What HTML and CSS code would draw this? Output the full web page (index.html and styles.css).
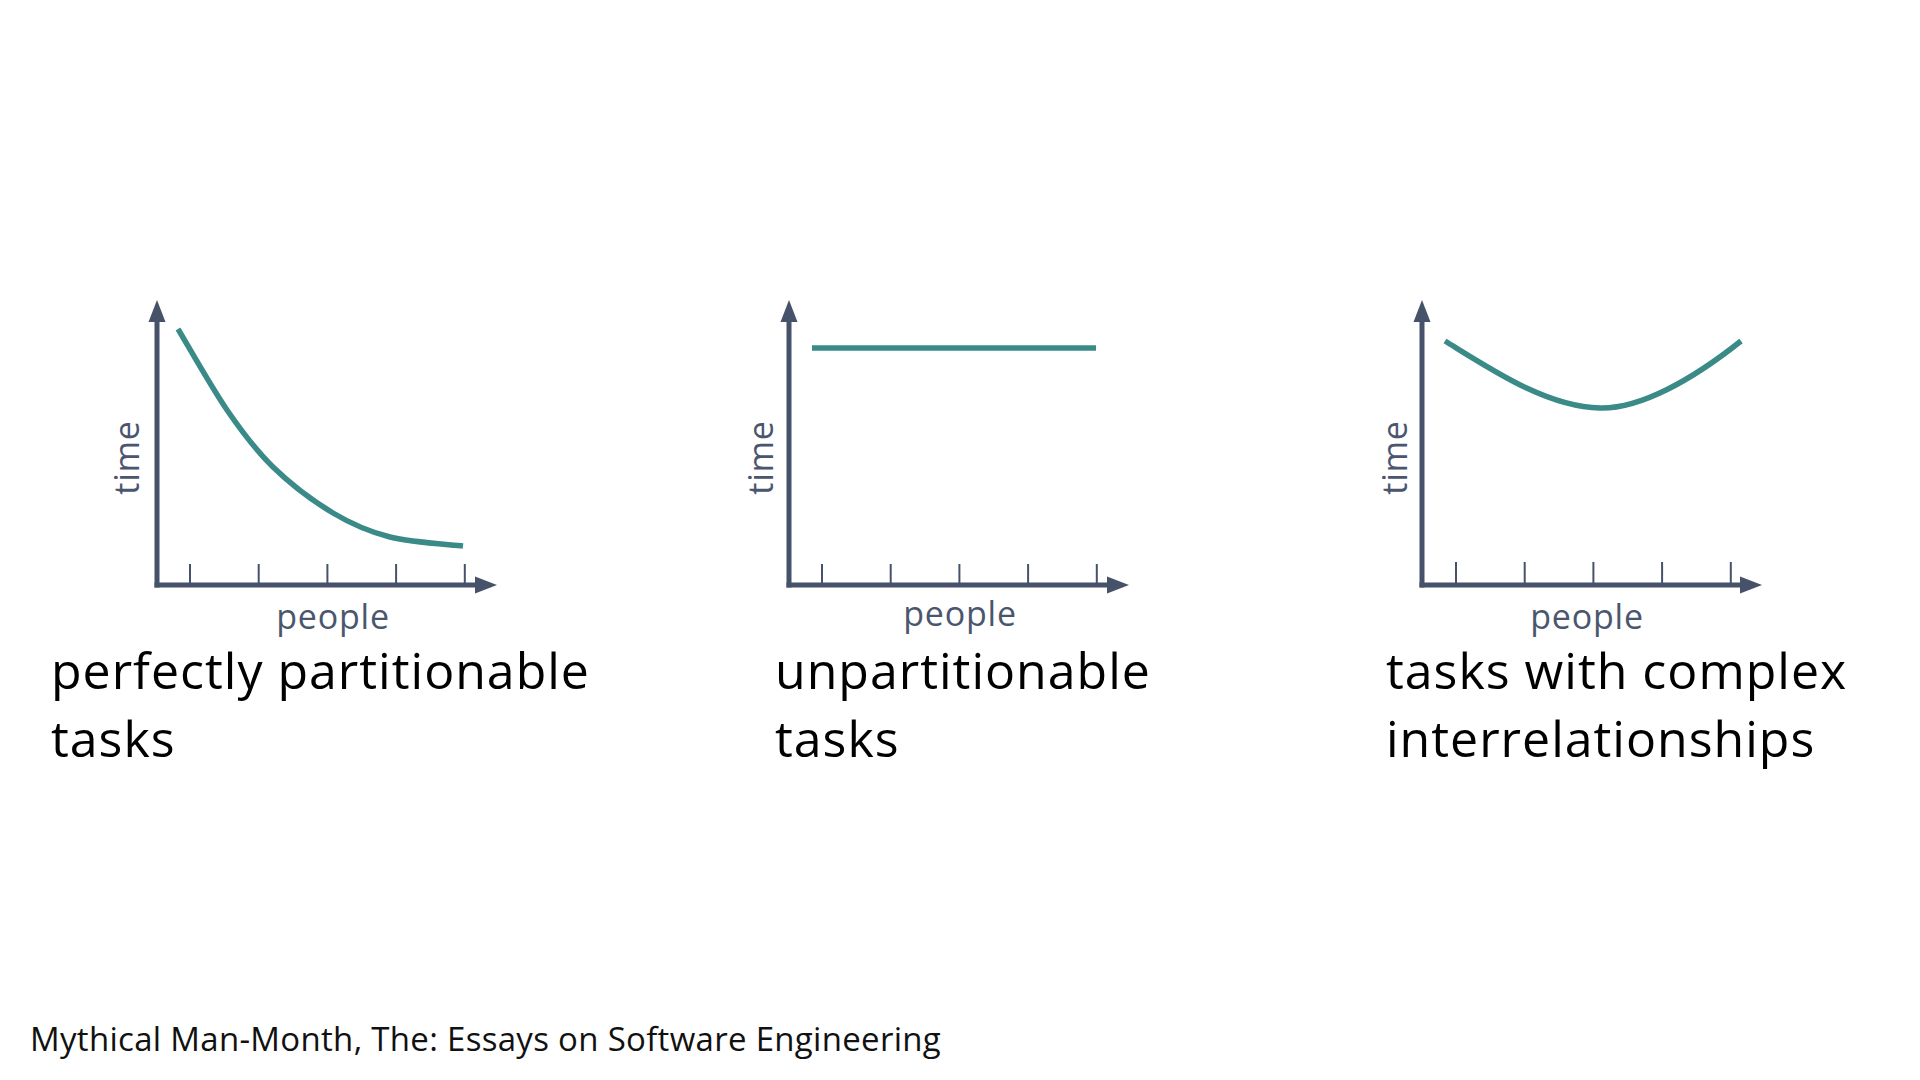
FILE: index.html
```html
<!DOCTYPE html>
<html lang="en">
<head>
<meta charset="utf-8">
<title>Mythical Man-Month</title>
<link rel="stylesheet" href="styles.css">
</head>
<body>
<main class="slide">
  <section class="panels">
    <figure class="panel panel--a">
      <svg class="chart" viewBox="0 0 396 346" width="396" height="346">
        <line class="axis" x1="50" y1="297.5" x2="50" y2="28"/>
        <polygon class="arrow" points="50,10 41.5,32 58.5,32"/>
        <line class="axis" x1="47.5" y1="295" x2="372" y2="295"/>
        <polygon class="arrow" points="390,295 368,286.5 368,303.5"/>
        <g class="ticks">
          <line x1="83" y1="274" x2="83" y2="295"/>
          <line x1="151.7" y1="274" x2="151.7" y2="295"/>
          <line x1="220.4" y1="274" x2="220.4" y2="295"/>
          <line x1="289.1" y1="274" x2="289.1" y2="295"/>
          <line x1="357.8" y1="274" x2="357.8" y2="295"/>
        </g>
        <path class="curve" d="M71 39 C79.2 52.5 104.2 97 120 120 C135.8 143 148.3 159.8 166 177 C183.7 194.2 206.5 211.3 226 223 C245.5 234.7 261.3 241.5 283 247 C304.7 252.5 343.8 254.5 356 256"/>
        <text class="axis-label" transform="translate(32 167.5) rotate(-90)" text-anchor="middle">time</text>
        <text class="axis-label" x="226" y="339" text-anchor="middle">people</text>
      </svg>
      <figcaption class="caption">perfectly partitionable<br>tasks</figcaption>
    </figure>
    <figure class="panel panel--b">
      <svg class="chart" viewBox="0 0 396 346" width="396" height="346">
        <line class="axis" x1="50" y1="297.5" x2="50" y2="28"/>
        <polygon class="arrow" points="50,10 41.5,32 58.5,32"/>
        <line class="axis" x1="47.5" y1="295" x2="372" y2="295"/>
        <polygon class="arrow" points="390,295 368,286.5 368,303.5"/>
        <g class="ticks">
          <line x1="83" y1="274" x2="83" y2="295"/>
          <line x1="151.7" y1="274" x2="151.7" y2="295"/>
          <line x1="220.4" y1="274" x2="220.4" y2="295"/>
          <line x1="289.1" y1="274" x2="289.1" y2="295"/>
          <line x1="357.8" y1="274" x2="357.8" y2="295"/>
        </g>
        <path class="curve" d="M73 58 L357 58"/>
        <text class="axis-label" transform="translate(34 167.5) rotate(-90)" text-anchor="middle">time</text>
        <text class="axis-label" x="221" y="336" text-anchor="middle">people</text>
      </svg>
      <figcaption class="caption">unpartitionable<br>tasks</figcaption>
    </figure>
    <figure class="panel panel--c">
      <svg class="chart" viewBox="0 0 396 346" width="396" height="346">
        <line class="axis" x1="50" y1="297.5" x2="50" y2="28"/>
        <polygon class="arrow" points="50,10 41.5,32 58.5,32"/>
        <line class="axis" x1="47.5" y1="295" x2="372" y2="295"/>
        <polygon class="arrow" points="390,295 368,286.5 368,303.5"/>
        <g class="ticks">
          <line x1="84" y1="272" x2="84" y2="295"/>
          <line x1="152.7" y1="272" x2="152.7" y2="295"/>
          <line x1="221.4" y1="272" x2="221.4" y2="295"/>
          <line x1="290.1" y1="272" x2="290.1" y2="295"/>
          <line x1="358.8" y1="272" x2="358.8" y2="295"/>
        </g>
        <path class="curve" d="M73 51 C120 80 175 117 228 118 C268 119 320 90 369 51"/>
        <text class="axis-label" transform="translate(35 167.5) rotate(-90)" text-anchor="middle">time</text>
        <text class="axis-label" x="215" y="339" text-anchor="middle">people</text>
      </svg>
      <figcaption class="caption">tasks with complex<br>interrelationships</figcaption>
    </figure>
  </section>
  <footer class="source">Mythical Man-Month, The: Essays on Software Engineering</footer>
</main>
</body>
</html>
```

FILE: styles.css
```css
html, body {
  margin: 0;
  padding: 0;
  background: #ffffff;
}

body {
  font-family: "Open Sans", "Liberation Sans", sans-serif;
  color: #000000;
}

.slide {
  width: 1920px;
  height: 1080px;
  display: flex;
  flex-direction: column;
  overflow: hidden;
}

.panels {
  display: flex;
  padding-top: 290px;
}

.panel {
  margin: 0;
  display: flex;
  flex-direction: column;
  flex: none;
}

.panel--a {
  margin-left: 51px;
  width: 724px;
}

.panel--b {
  width: 611px;
}

.panel--c {
  width: 500px;
}

.chart {
  display: block;
  overflow: visible;
}

.panel--a .chart {
  margin-left: 56px;
}

.panel--b .chart {
  margin-left: -36px;
}

.panel--c .chart {
  margin-left: -14px;
}

.axis {
  stroke: #455269;
  stroke-width: 5;
}

.arrow {
  fill: #455269;
}

.ticks line {
  stroke: #455269;
  stroke-width: 2;
}

.curve {
  fill: none;
  stroke: #3a8a88;
  stroke-width: 5.5;
}

.axis-label {
  font-family: "Open Sans", "Liberation Sans", sans-serif;
  font-size: 34px;
  letter-spacing: 0.8px;
  fill: #4a566e;
}

.caption {
  margin: 0;
  font-size: 50px;
  line-height: 68px;
  letter-spacing: 1px;
  color: #000000;
  white-space: nowrap;
}

.source {
  margin-top: auto;
  padding: 0 0 21px 30px;
  font-size: 33px;
  line-height: 40px;
  letter-spacing: 0.3px;
  color: #111111;
  white-space: nowrap;
}
```
